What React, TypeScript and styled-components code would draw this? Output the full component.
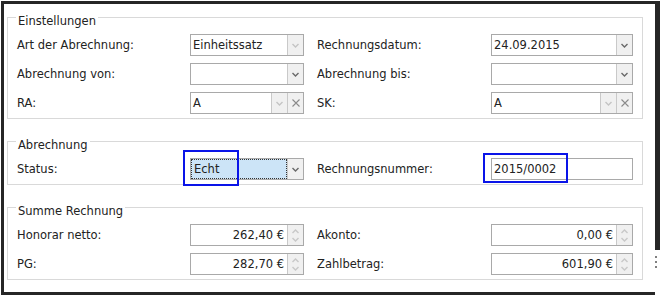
import React from 'react';
import styled, { createGlobalStyle } from 'styled-components';

const GlobalStyle = createGlobalStyle`
  html, body {
    margin: 0;
    padding: 0;
    background: #ffffff;
  }
  body {
    font-family: "DejaVu Sans", sans-serif;
    font-size: 11.5px;
    color: #222;
  }
`;

/* window frame */
const Frame = styled.div`
  display: flex;
  width: 659px;
  height: 294px;
  margin: 1px 0 0 1px;
  box-sizing: border-box;
`;

const Main = styled.div`
  flex: 1;
  display: flex;
  flex-direction: column;
  gap: 12px;
  padding: 3px 12px 0 3px;
  border: 3px solid #262626;
  border-right: none;
  box-sizing: border-box;
`;

/* splitter on the right */
const Edge = styled.div`
  width: 5px;
  display: flex;
  flex-direction: column;
  align-items: center;
`;

const EdgeBar = styled.div`
  width: 100%;
  height: 249px;
  background: #262626;
`;

const Grip = styled.div`
  margin-top: 6px;
  margin-left: -3px;
  display: flex;
`;

/* group box */
const Group = styled.fieldset`
  margin: 0;
  padding: 6px 9px 4px;
  border: 1px solid #d9d9d9;
  min-width: 0;
`;

const Legend = styled.legend`
  padding: 7px 2px 0;
  margin-left: -1px;
  line-height: 14px;
  color: #222;
`;

const Grid = styled.div`
  display: grid;
  grid-template-columns: 173px 114px 187px 142px;
  row-gap: 7px;
  align-items: center;
`;

const Label = styled.div<{ $right?: boolean }>`
  padding-left: ${({ $right }) => ($right ? '13px' : '0')};
  padding-top: 1px;
  line-height: 21px;
  white-space: nowrap;
  color: #222;
`;

const Cell = styled.div`
  position: relative;
`;

const Box = styled.div`
  display: flex;
  height: 22px;
  box-sizing: border-box;
  border: 1px solid #a9a9a9;
  background: #fff;
`;

const Value = styled.div<{ $align?: 'left' | 'right'; $focus?: boolean }>`
  flex: 1;
  min-width: 0;
  box-sizing: border-box;
  padding: 0 ${({ $align }) => ($align === 'right' ? '3px' : '2px')};
  line-height: ${({ $focus }) => ($focus ? '18px' : '20px')};
  text-align: ${({ $align }) => $align || 'left'};
  white-space: nowrap;
  color: #222;
  background: ${({ $focus }) => ($focus ? '#cce4f7' : 'transparent')};
  border: ${({ $focus }) => ($focus ? '1px dotted #333' : 'none')};
`;

const Btn = styled.div`
  width: 15px;
  flex: none;
  border-left: 1px solid #c9c9c9;
  background: #f0f0f0;
  display: flex;
  flex-direction: column;
  align-items: center;
  justify-content: center;
  gap: 3px;
`;

/* blue markers over fields */
const Mark = styled.div<{ $l: number; $t: number; $w: number; $h: number }>`
  position: absolute;
  left: ${({ $l }) => $l}px;
  top: ${({ $t }) => $t}px;
  width: ${({ $w }) => $w}px;
  height: ${({ $h }) => $h}px;
  box-sizing: border-box;
  border: 2px solid #0a14e8;
  pointer-events: none;
`;

const Chevron = ({ color = '#777', up = false }: { color?: string; up?: boolean }) => (
  <svg width="7" height="5" viewBox="0 0 7 5">
    <polyline
      points={up ? '0.5,4 3.5,1 6.5,4' : '0.5,1 3.5,4 6.5,1'}
      fill="none"
      stroke={color}
      strokeWidth="1.4"
    />
  </svg>
);

const Cross = () => (
  <svg width="8" height="8" viewBox="0 0 8 8">
    <path d="M0.5 0.5 L7.5 7.5 M7.5 0.5 L0.5 7.5" stroke="#8a8a8a" strokeWidth="1.1" fill="none" />
  </svg>
);

const Dots = () => (
  <svg width="3" height="12" viewBox="0 0 3 12">
    <rect x="0" y="0" width="2" height="2" fill="#808080" />
    <rect x="0" y="5" width="2" height="2" fill="#808080" />
    <rect x="0" y="10" width="2" height="2" fill="#808080" />
  </svg>
);

type ComboProps = { value?: string; dim?: boolean; clear?: boolean; focus?: boolean };

const Combo = ({ value = '', dim, clear, focus }: ComboProps) => (
  <Box>
    <Value $focus={focus}>{value}</Value>
    <Btn>
      <Chevron color={dim ? '#c4c4c4' : '#6a6a6a'} />
    </Btn>
    {clear && (
      <Btn>
        <Cross />
      </Btn>
    )}
  </Box>
);

const Money = ({ value }: { value: string }) => (
  <Box>
    <Value $align="right">{value}</Value>
    <Btn>
      <Chevron up color="#c8c8c8" />
      <Chevron color="#c8c8c8" />
    </Btn>
  </Box>
);

export default function App() {
  return (
    <>
      <GlobalStyle />
      <Frame>
        <Main>
          <Group>
            <Legend>Einstellungen</Legend>
            <Grid>
              <Label>Art der Abrechnung:</Label>
              <Combo value="Einheitssatz" dim />
              <Label $right>Rechnungsdatum:</Label>
              <Combo value="24.09.2015" />

              <Label>Abrechnung von:</Label>
              <Combo />
              <Label $right>Abrechnung bis:</Label>
              <Combo />

              <Label>RA:</Label>
              <Combo value="A" dim clear />
              <Label $right>SK:</Label>
              <Combo value="A" dim clear />
            </Grid>
          </Group>

          <Group>
            <Legend>Abrechnung</Legend>
            <Grid>
              <Label>Status:</Label>
              <Cell>
                <Combo value="Echt" focus />
                <Mark $l={-7} $t={-8} $w={56} $h={36} />
              </Cell>
              <Label $right>Rechnungsnummer:</Label>
              <Cell>
                <Box>
                  <Value>2015/0002</Value>
                </Box>
                <Mark $l={-8} $t={-5} $w={85} $h={30} />
              </Cell>
            </Grid>
          </Group>

          <Group>
            <Legend>Summe Rechnung</Legend>
            <Grid>
              <Label>Honorar netto:</Label>
              <Money value="262,40 €" />
              <Label $right>Akonto:</Label>
              <Money value="0,00 €" />

              <Label>PG:</Label>
              <Money value="282,70 €" />
              <Label $right>Zahlbetrag:</Label>
              <Money value="601,90 €" />
            </Grid>
          </Group>
        </Main>
        <Edge>
          <EdgeBar />
          <Grip>
            <Dots />
          </Grip>
        </Edge>
      </Frame>
    </>
  );
}
